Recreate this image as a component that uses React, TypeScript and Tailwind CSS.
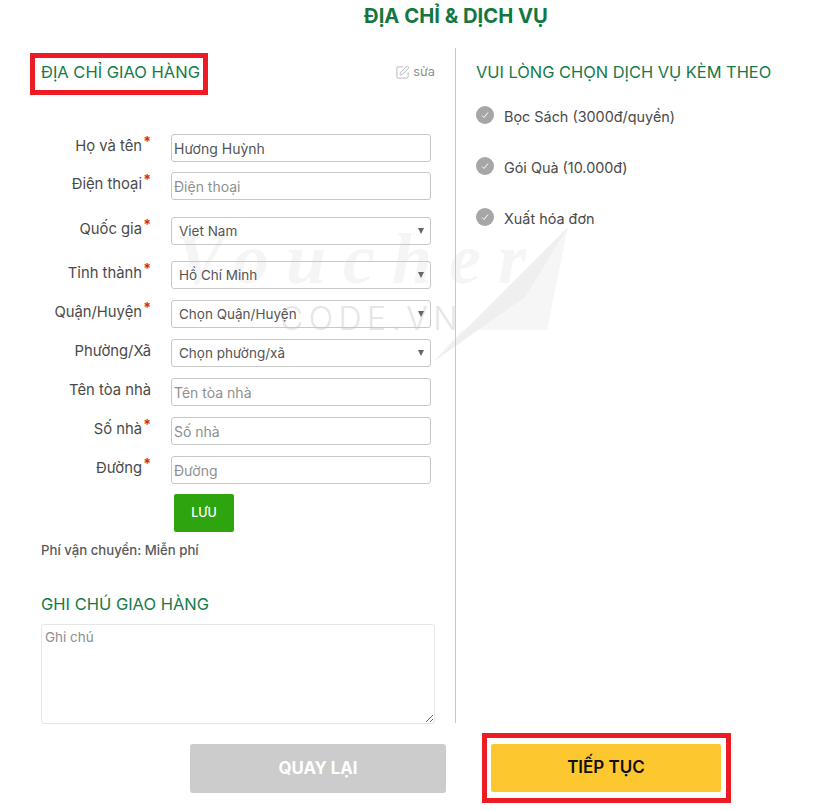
import { SquarePen } from 'lucide-react'

const font = "font-['Inter','Noto_Sans',sans-serif]"

const fields = [
  { label: 'Họ và tên', req: true, value: 'Hương Huỳnh', gap: 'mt-0' },
  { label: 'Điện thoại', req: true, placeholder: 'Điện thoại', gap: 'mt-[10px]' },
  { label: 'Quốc gia', req: true, select: 'Viet Nam', gap: 'mt-[17px]' },
  { label: 'Tỉnh thành', req: true, select: 'Hồ Chí Minh', gap: 'mt-[16px]' },
  { label: 'Quận/Huyện', req: true, select: 'Chọn Quận/Huyện', gap: 'mt-[11px]' },
  { label: 'Phường/Xã', select: 'Chọn phường/xã', gap: 'mt-[11px]' },
  { label: 'Tên tòa nhà', placeholder: 'Tên tòa nhà', gap: 'mt-[11px]' },
  { label: 'Số nhà', req: true, placeholder: 'Số nhà', gap: 'mt-[11px]' },
  { label: 'Đường', req: true, placeholder: 'Đường', gap: 'mt-[11px]' },
]

const services = ['Bọc Sách (3000đ/quyền)', 'Gói Quà (10.000đ)', 'Xuất hóa đơn']

function Field({ f }: { f: (typeof fields)[number] }) {
  return (
    <div className={`flex ${f.gap}`}>
      <div className={`w-[130px] -mt-[2px] shrink-0 text-right text-[14.8px] text-[#4a4a4a] leading-[28px] relative ${f.req ? 'pr-[29px]' : 'pr-[20px]'}`}>
        {f.label}
        {f.req && <span className="absolute right-[20px] -top-[4px] text-[#d0301f] text-[14px] font-bold">*</span>}
      </div>
      {f.select ? (
        <div className="w-[260px] h-[28px] border border-[#c8c8c8] rounded-[3px] flex items-center justify-between pl-[7px] pr-[6px] pt-[1px] text-[13.5px] text-[#555]">
          <span>{f.select}</span>
          <svg width="6" height="6" viewBox="0 0 6 6" className="-mt-[2px]">
            <path d="M0 0 H6 L3 6 Z" fill="#666" />
          </svg>
        </div>
      ) : (
        <input
          readOnly
          value={f.value ?? ''}
          placeholder={f.placeholder}
          className="w-[260px] h-[28px] border border-[#c8c8c8] rounded-[3px] px-[2px] text-[14px] text-[#555] placeholder:text-[#8f8f8f] outline-none bg-transparent"
        />
      )}
    </div>
  )
}

function Watermark() {
  return (
    <div className="absolute left-[170px] top-[215px] w-[420px] h-[170px] pointer-events-none">
      <div className="absolute left-[6px] top-[8px] font-['Liberation_Serif',serif] italic font-bold text-[72px] leading-none tracking-[17px] text-[#f5f5f5]">
        Voucher
      </div>
      <div className="absolute left-[110px] top-[88px] font-['Inter',sans-serif] font-light text-[32px] leading-none tracking-[5.5px] text-[#e6e6e6]">
        CODE.VN
      </div>
      <svg className="absolute left-[255px] top-0" width="150" height="150" viewBox="0 0 150 150">
        <path d="M143 12 L8 147 L37 115 L122 115 Z" fill="#f6f6f6" />
        <path d="M143 12 L8 147 L100 82 Z" fill="#efefef" />
      </svg>
    </div>
  )
}

export default function App() {
  return (
    <div className={`relative w-[815px] h-[810px] bg-white overflow-hidden ${font}`}>
      <Watermark />

      <div className="relative">
        <h1 className="pt-[5px] pl-[97px] text-center text-[20.2px] leading-[22px] font-bold text-[#14773f]">
          ĐỊA CHỈ &amp; DỊCH VỤ
        </h1>

        <div className="flex mt-[21px] pl-[41px]">
          {/* Left column */}
          <div className="w-[415px] h-[675px] border-r border-[#c9c9c9] pr-[20px]">
            <div className="flex justify-between pt-[13px] items-center">
              <h2 className="text-[16.5px] leading-[22px] text-[#157a4a]">ĐỊA CHỈ GIAO HÀNG</h2>
              <span className="flex items-center gap-[3px] text-[12.8px] text-[#8f8f8f]">
                <SquarePen size={15} strokeWidth={1.25} className="text-[#a8a8a8]" /> sửa
              </span>
            </div>

            <div className="mt-[51px]">
              {fields.map(f => <Field key={f.label} f={f} />)}
            </div>

            <button className="block ml-[133px] mt-[10px] w-[60px] h-[38px] rounded-[2px] bg-[#2ea40e] text-white text-[12.5px] font-medium">
              LƯU
            </button>

            <p className="mt-[9px] text-[13.2px] leading-[18px] font-medium text-[#5a5a5a]">Phí vận chuyển: Miễn phí</p>

            <h2 className="mt-[34px] text-[16.5px] leading-[22px] text-[#157a4a]">GHI CHÚ GIAO HÀNG</h2>

            <textarea
              readOnly
              placeholder="Ghi chú"
              className="block mt-[9px] w-[394px] h-[100px] border border-[#e6e6e6] rounded-[3px] px-[3px] py-[2px] text-[13.5px] placeholder:text-[#8f8f8f] outline-none bg-transparent"
            />
          </div>

          {/* Right column */}
          <div className="pl-[20px] pt-[13px]">
            <h2 className="text-[16.4px] leading-[22px] text-[#157a4a]">VUI LÒNG CHỌN DỊCH VỤ KÈM THEO</h2>
            <div className="mt-[25px] space-y-[33px]">
              {services.map(s => (
                <div key={s} className="flex items-center gap-[10px] h-[18px] text-[14.4px] text-[#4a4a4a]">
                  <span className="-mt-[5px] w-[18px] h-[18px] rounded-full bg-[#a6a6a6] flex items-center justify-center">
                    <svg width="10" height="10" viewBox="0 0 10 10" fill="none" stroke="#fff" strokeWidth="1">
                      <path d="M2 5.5 L4 7.5 L8 2.5" />
                    </svg>
                  </span>
                  {s}
                </div>
              ))}
            </div>
          </div>
        </div>

        {/* Bottom buttons */}
        <div className="flex mt-[21px] ml-[190px] gap-[45px]">
          <button className="w-[256px] h-[49px] rounded-[3px] bg-[#cccccc] text-white text-[16.8px] font-bold">QUAY LẠI</button>
          <button className="w-[230px] h-[48px] rounded-[2px] bg-[#fdc82f] text-[#111] text-[17px] font-semibold">TIẾP TỤC</button>
        </div>
      </div>

      {/* Red annotation boxes */}
      <div className="absolute left-[30px] top-[53px] w-[178px] h-[42px] border-[5px] border-[#ed1c24]" />
      <div className="absolute left-[482px] top-[733px] w-[249px] h-[70px] border-[5px] border-[#ed1c24]" />
    </div>
  )
}
